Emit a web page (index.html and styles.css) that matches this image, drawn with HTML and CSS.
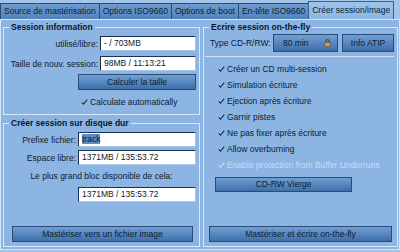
FILE: index.html
```html
<!doctype html>
<html lang="fr">
<head>
    <meta charset="UTF-8">
    <title>Créer session/image</title>
    <link rel="stylesheet" href="styles.css">
</head>
<body>
    <div class="tabs">
        <div class="tab">Source de mastérisation</div>
        <div class="tab">Options ISO9660</div>
        <div class="tab">Options de boot</div>
        <div class="tab">En-tête ISO9660</div>
        <div class="tab is-active">Créer session/image</div>
    </div>
    <div class="panel">
        <div class="col col-left">
            <fieldset class="group group-info">
                <legend>Session information</legend>
                <div class="row">
                    <span class="label label-wide">utilisé/libre:</span>
                    <div class="field">- / 703MB</div>
                </div>
                <div class="row row-gap">
                    <span class="label label-wide">Taille de nouv. session:</span>
                    <div class="field">98MB / 11:13:21</div>
                </div>
                <div class="btn btn-calc">Calculer la taille</div>
                <div class="check check-auto"><svg class="tick" viewBox="0 0 8 7"><path d="M0.8 4 L2.8 6 L7.2 0.8"/></svg>Calculate automatically</div>
            </fieldset>
            <fieldset class="group group-disk">
                <legend>Créer session sur disque dur</legend>
                <div class="row">
                    <span class="label">Prefixe fichier:</span>
                    <div class="field"><span class="selected">track</span></div>
                </div>
                <div class="row row-gap-small">
                    <span class="label">Espace libre:</span>
                    <div class="field">1371MB / 135:53.72</div>
                </div>
                <div class="note">Le plus grand bloc disponible de cela:</div>
                <div class="field field-block">1371MB / 135:53.72</div>
                <div class="btn btn-bottom btn-image">Mastériser vers un fichier image</div>
            </fieldset>
        </div>
        <div class="col col-right">
            <fieldset class="group group-fly">
                <legend>Ecrire session on-the-fly</legend>
                <div class="row row-type">
                    <span class="type-label">Type CD-R/RW:</span>
                    <div class="btn combo">80 min
                        <svg class="lock" viewBox="0 0 8 9"><path d="M2 4 V2.6 a2 2 0 0 1 4 0 V4" fill="none" stroke="#3b2a10" stroke-width="1"/><rect x="1" y="4" width="6" height="4.5" rx="1" fill="#d9a24a" stroke="#5a3d12" stroke-width="0.6"/></svg>
                    </div>
                    <div class="btn btn-atip">Info ATIP</div>
                </div>
                <div class="sep"></div>
                <div class="check"><svg class="tick" viewBox="0 0 8 7"><path d="M0.8 4 L2.8 6 L7.2 0.8"/></svg>Créer un CD multi-session</div>
                <div class="check"><svg class="tick" viewBox="0 0 8 7"><path d="M0.8 4 L2.8 6 L7.2 0.8"/></svg>Simulation écriture</div>
                <div class="check"><svg class="tick" viewBox="0 0 8 7"><path d="M0.8 4 L2.8 6 L7.2 0.8"/></svg>Ejection après écriture</div>
                <div class="check"><svg class="tick" viewBox="0 0 8 7"><path d="M0.8 4 L2.8 6 L7.2 0.8"/></svg>Garnir pistes</div>
                <div class="check"><svg class="tick" viewBox="0 0 8 7"><path d="M0.8 4 L2.8 6 L7.2 0.8"/></svg>Ne pas fixer après écriture</div>
                <div class="check"><svg class="tick" viewBox="0 0 8 7"><path d="M0.8 4 L2.8 6 L7.2 0.8"/></svg>Allow overburning</div>
                <div class="check is-disabled"><svg class="tick" viewBox="0 0 8 7"><path d="M0.8 4 L2.8 6 L7.2 0.8"/></svg>Enable protection from Buffer Underruns</div>
                <div class="btn btn-blank">CD-RW Vierge</div>
                <div class="btn btn-bottom btn-fly">Mastériser et écrire on-the-fly</div>
            </fieldset>
        </div>
    </div>
</body>
</html>
```

FILE: styles.css
```css
html,body{
    margin: 0;
    padding: 0;
}
body{
    width: 400px;
    height: 252px;
    overflow: hidden;
    background: #a3c4e8;
    font-family: "Liberation Sans", Arial, sans-serif;
    font-size: 8.5px;
    color: #0d1b2d;
}
.tabs{
    display: flex;
    align-items: flex-end;
    height: 19px;
}
.tab{
    height: 15px;
    line-height: 15px;
    padding: 0 3px;
    border: 1px solid #2c4b72;
    border-bottom: none;
    margin-right: -1px;
    background: linear-gradient(#6c9bcf, #5283ba);
    color: #0e1d31;
    white-space: nowrap;
}
.tab.is-active{
    height: 17px;
    line-height: 17px;
    background: linear-gradient(#9ec4ec, #8cb6e3);
    border-color: #3a5f8c;
}
.panel{
    display: flex;
    gap: 3px;
    box-sizing: border-box;
    height: 231px;
    padding: 1px 1px 2px 2px;
    border: 1px solid #d4e5f6;
    background: #8cb5e3;
}
.col{
    display: flex;
    flex-direction: column;
}
.col-left{
    width: 197px;
    gap: 2px;
}
.col-right{
    width: 195px;
}
.group{
    display: flex;
    flex-direction: column;
    margin: 0;
    padding: 3px 3px 4px 3px;
    border: 1px solid #d9e8f8;
    min-width: 0;
}
.group legend{
    margin-left: 2px;
    padding: 0 2px;
    line-height: 12px;
    font-weight: bold;
    color: #0a1525;
}
.group-info{
    padding-bottom: 6px;
}
.group-disk,.group-fly{
    flex: 1;
}
.group-fly{
    padding-top: 1px;
}
.row{
    display: flex;
    align-items: center;
    height: 15px;
}
.row-gap{
    margin-top: 5px;
}
.row-gap-small{
    margin-top: 3px;
}
.label{
    width: 69px;
    margin-right: 2px;
    text-align: right;
    white-space: nowrap;
}
.label-wide{
    width: 91px;
}
.field{
    flex: 1;
    box-sizing: border-box;
    height: 15px;
    line-height: 13px;
    padding-left: 3px;
    background: #fff;
    border: 1px solid #a9c8e8;
    border-top-color: #1b3150;
    border-left-color: #1b3150;
    white-space: nowrap;
    overflow: hidden;
}
.field-block{
    flex: none;
    margin-left: 71px;
    margin-top: 5px;
}
.selected{
    background: #5b8cc8;
    color: #0a1628;
}
.note{
    margin-top: 5px;
    line-height: 12px;
    text-align: center;
}
.btn{
    box-sizing: border-box;
    height: 16px;
    line-height: 14px;
    text-align: center;
    border: 1px solid #2a4c78;
    background: linear-gradient(#6f9fd3, #3f6fa8);
    color: #0e1c30;
    white-space: nowrap;
}
.btn-calc{
    margin: 3px 0 0 71px;
}
.check{
    display: flex;
    align-items: center;
    height: 16px;
    padding-left: 11px;
    white-space: nowrap;
}
.check-auto{
    height: 12px;
    margin-top: 6px;
    padding-left: 74px;
}
.tick{
    width: 7px;
    height: 6px;
    margin-right: 2px;
    fill: none;
    stroke: #1b2b40;
    stroke-width: 1.2;
}
.check.is-disabled{
    color: #c9dcf1;
}
.check.is-disabled .tick{
    stroke: #c9dcf1;
}
.btn-bottom{
    margin-top: auto;
}
.btn-image{
    margin-left: 5px;
    margin-right: 3px;
}
.row-type{
    height: 18px;
}
.type-label{
    width: 63px;
    padding-left: 3px;
    white-space: nowrap;
}
.combo{
    display: flex;
    align-items: center;
    justify-content: space-between;
    width: 65px;
    height: 18px;
    padding: 0 6px 0 9px;
    text-align: left;
}
.lock{
    width: 7px;
    height: 8px;
}
.btn-atip{
    width: 52px;
    height: 18px;
    line-height: 16px;
    margin-left: 4px;
}
.sep{
    margin: 4px 0 4px -2px;
    border-top: 1px solid #d3e4f6;
}
.btn-blank{
    width: 137px;
    height: 15px;
    line-height: 13px;
    margin: 4px 0 0 8px;
}
.btn-fly{
    width: 183px;
    margin-left: 2px;
}
```
